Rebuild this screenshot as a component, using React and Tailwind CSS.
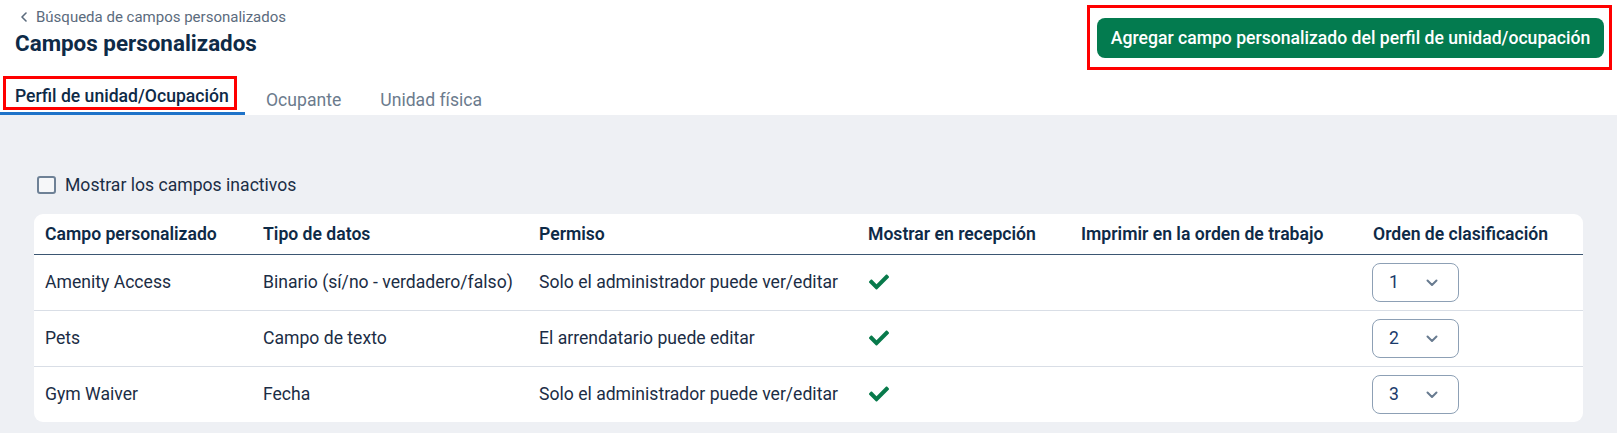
import { FaCheck } from "react-icons/fa";

const rows = [
  { name: "Amenity Access", type: "Binario (sí/no - verdadero/falso)", perm: "Solo el administrador puede ver/editar", order: 1 },
  { name: "Pets", type: "Campo de texto", perm: "El arrendatario puede editar", order: 2 },
  { name: "Gym Waiver", type: "Fecha", perm: "Solo el administrador puede ver/editar", order: 3 },
];

const cols = "grid grid-cols-[218px_276px_329px_213px_292px_1fr]";

function Chevron({ className }) {
  return (
    <svg viewBox="0 0 12 8" className={className} fill="none" stroke="currentColor" strokeWidth="2" strokeLinecap="round" strokeLinejoin="round">
      <path d="M1.5 1.5 6 6l4.5-4.5" />
    </svg>
  );
}

export default function App() {
  return (
    <div className="w-[1617px] h-[433px] overflow-hidden bg-[#eef0f4] font-['Roboto',sans-serif] text-[#1b2d45]">
      {/* HEADER */}
      <div className="bg-white h-[115px] flex flex-col">
        <div className="h-[73px] flex justify-between items-start">
          <div className="pl-[15px] pt-[8px]">
            <a className="flex items-center gap-[9px] pl-[6px] text-[15px] leading-[18px] text-[#5b6b7d]">
              <svg viewBox="0 0 6 10" className="w-[6px] h-[10px]" fill="none" stroke="currentColor" strokeWidth="1.6" strokeLinecap="round" strokeLinejoin="round">
                <path d="M5 1 1 5l4 4" />
              </svg>
              Búsqueda de campos personalizados
            </a>
            <h1 className="mt-[3px] text-[22.4px] leading-[28px] font-bold text-[#0e2a47]">Campos personalizados</h1>
          </div>
          <div className="mt-[5px] mr-[5px] border-[3px] border-[#ff0000] pl-[7px] pr-[5px] pt-[10px] pb-[9px]">
            <button className="w-[507px] h-[40px] rounded-[8px] bg-[#037b4f] text-white text-[17.6px] font-medium">
              Agregar campo personalizado del perfil de unidad/ocupación
            </button>
          </div>
        </div>

        {/* TABS */}
        <div className="h-[42px] flex items-stretch text-[17.6px]">
          <div className="w-[245px] pt-[3px] border-b-[3px] border-[#1e73c9]">
            <div className="ml-[3px] w-[234px] h-[34px] border-[3px] border-[#ff0000] flex items-center pl-[9px] pt-[6px] font-medium text-[#0e2a47]">
              Perfil de unidad/Ocupación
            </div>
          </div>
          <div className="px-[21px] pt-[14px] text-[#6b7b8d]">Ocupante</div>
          <div className="px-[18px] pt-[14px] text-[#6b7b8d]">Unidad física</div>
        </div>
      </div>

      {/* CONTENT */}
      <div className="px-[34px] pt-[61px]">
        <label className="flex items-center gap-[9px] h-[18px] ml-[3px] text-[17.6px] text-[#1b2d45]">
          <span className="w-[19px] h-[18px] rounded-[3px] border-2 border-[#6e8196] bg-[#f6f7f9]" />
          Mostrar los campos inactivos
        </label>

        <div className="mt-[20px] w-[1549px] bg-white rounded-[9px] overflow-hidden">
          <div className={`${cols} h-[41px] items-center border-b border-[#3b5672] text-[17.6px] font-semibold text-[#0e2a47]`}>
            <div className="pl-[11px]">Campo personalizado</div>
            <div className="pl-[11px]">Tipo de datos</div>
            <div className="pl-[11px]">Permiso</div>
            <div className="pl-[11px]">Mostrar en recepción</div>
            <div className="pl-[11px]">Imprimir en la orden de trabajo</div>
            <div className="pl-[11px]">Orden de clasificación</div>
          </div>
          {rows.map((r, i) => (
            <div
              key={r.name}
              className={`${cols} items-center text-[17.6px] ${i < rows.length - 1 ? "h-[56px] border-b border-[#d9dee6]" : "h-[55px]"}`}
            >
              <div className="pl-[11px]">{r.name}</div>
              <div className="pl-[11px]">{r.type}</div>
              <div className="pl-[11px]">{r.perm}</div>
              <div className="pl-[12px] pb-[2px]">
                <FaCheck className="w-[20px] h-[20px] text-[#087a4b]" />
              </div>
              <div />
              <div className="pl-[10px]">
                <div className="w-[87px] h-[39px] border border-[#8da0b5] rounded-[8px] flex items-center pl-[16px] gap-[27px] text-[#1a3a6b]">
                  <span className="w-[10px]">{r.order}</span>
                  <Chevron className="w-[12px] h-[8px] text-[#687b90]" />
                </div>
              </div>
            </div>
          ))}
        </div>
      </div>
    </div>
  );
}
